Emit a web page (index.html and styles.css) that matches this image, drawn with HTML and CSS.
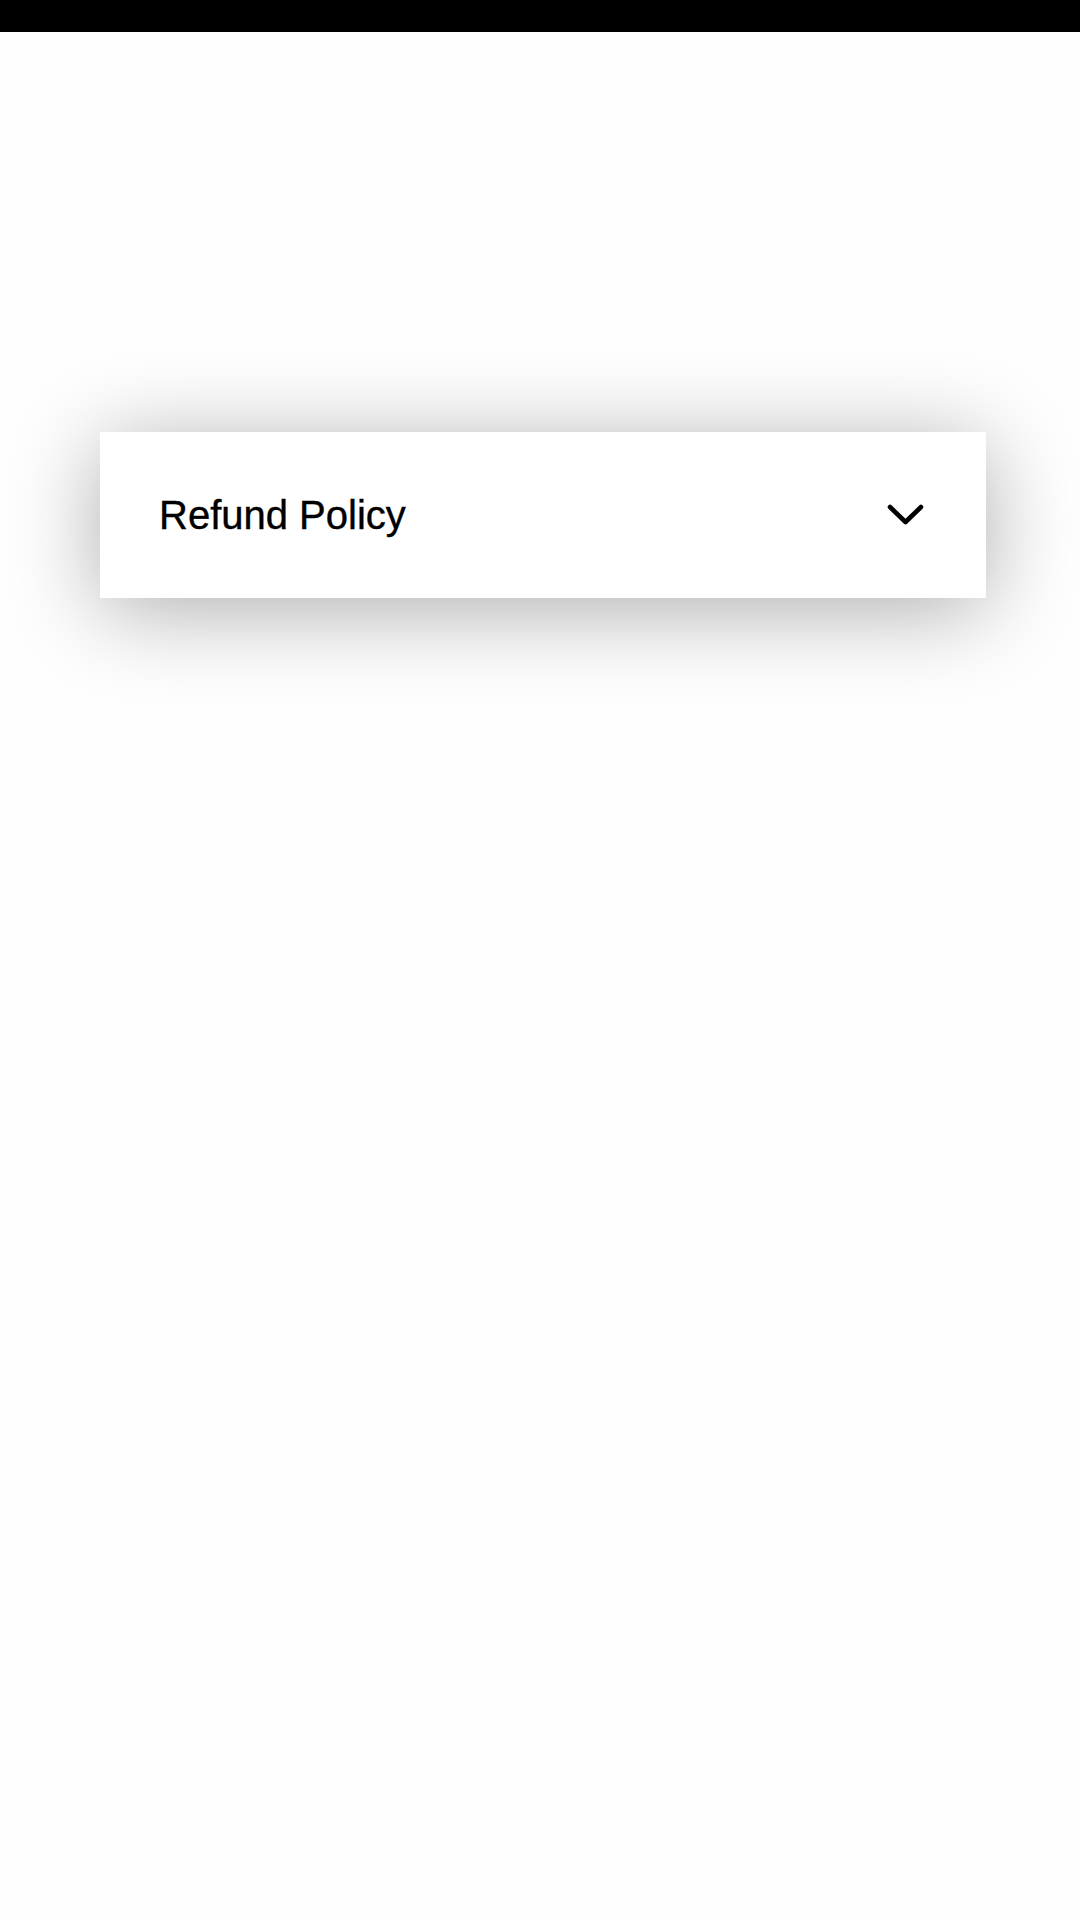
FILE: index.html
```html
<!DOCTYPE html>
<html lang="en">
<head>
<meta charset="utf-8">
<title>Refund Policy</title>
<link rel="stylesheet" href="styles.css">
</head>
<body>
<div class="topbar"></div>
<main class="content">
  <section class="accordion">
    <button class="accordion-header" type="button">
      <span class="accordion-title">Refund Policy</span>
      <svg class="chevron" width="39" height="24" viewBox="0 0 39 24" aria-hidden="true">
        <polyline points="4,4 19.5,19 35,4" fill="none" stroke="#000" stroke-width="4.6" stroke-linecap="round" stroke-linejoin="round"/>
      </svg>
    </button>
  </section>
</main>
</body>
</html>
```
FILE: styles.css
```css
html, body {
  margin: 0;
  padding: 0;
  background: #fefefe;
}
body {
  font-family: "Liberation Sans", Arial, Helvetica, sans-serif;
  color: #000;
  width: 1080px;
  min-height: 1920px;
}
.topbar {
  height: 32px;
  background: #000;
}
.content {
  padding: 400px 94px 0 100px;
}
.accordion {
  background: #fff;
  box-shadow: 0 12px 90px rgba(0, 0, 0, 0.32);
}
.accordion-header {
  display: flex;
  align-items: center;
  justify-content: space-between;
  width: 100%;
  height: 166px;
  padding: 0 61px 0 59px;
  border: 0;
  background: transparent;
  font: inherit;
  color: inherit;
  box-sizing: border-box;
  text-align: left;
}
.accordion-title {
  font-size: 40px;
  line-height: 1;
  -webkit-text-stroke: 0.4px #000;
}
.chevron {
  display: block;
}
```
